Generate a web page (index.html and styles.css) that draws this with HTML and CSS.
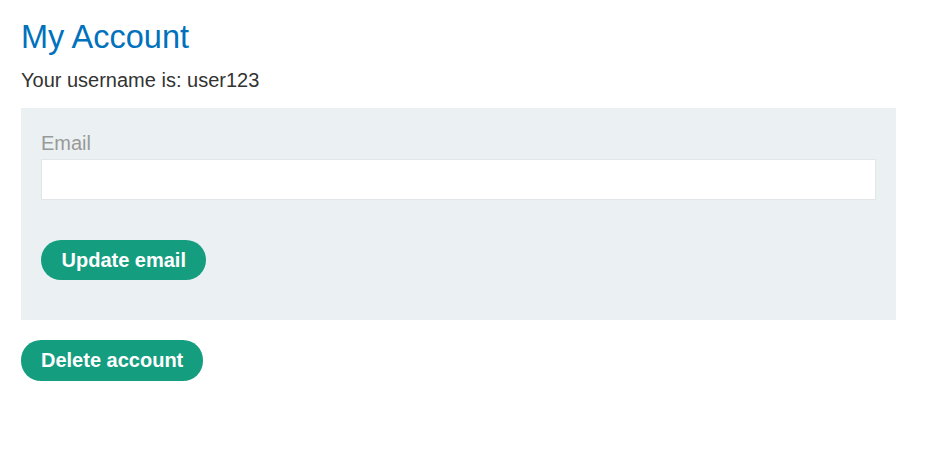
FILE: index.html
```html
<!DOCTYPE html>
<html>
<head>
<meta charset="utf-8">
<link rel="stylesheet" href="styles.css">
</head>
<body>
<main class="page">
  <h1 class="title">My Account</h1>
  <p class="username">Your username is: user123</p>
  <form class="panel">
    <label class="label" for="email">Email</label>
    <input class="input" id="email" type="email">
    <button class="button" type="button">Update email</button>
  </form>
  <button class="button button-delete" type="button">Delete account</button>
</main>
</body>
</html>
```

FILE: styles.css
```css
html, body {
  margin: 0;
  padding: 0;
  background: #fff;
}
body {
  font-family: "Liberation Sans", Arial, sans-serif;
  color: #333332;
}
.page {
  padding: 17px 54px 0 21px;
  display: flex;
  flex-direction: column;
  align-items: flex-start;
}
.title {
  margin: 0;
  font-size: 32.5px;
  font-weight: normal;
  line-height: 40px;
  color: #0071bc;
}
.username {
  margin: 11px 0 0 0;
  font-size: 20px;
  line-height: 24px;
}
.panel {
  margin-top: 16px;
  align-self: stretch;
  background: #ebf0f2;
  padding: 21px 20px 40px 20px;
  display: flex;
  flex-direction: column;
  align-items: flex-start;
}
.label {
  font-size: 20px;
  line-height: 28px;
  color: #999;
}
.input {
  align-self: stretch;
  box-sizing: border-box;
  height: 41px;
  margin: 2px 0 40px 0;
  border: 1px solid #e3e6e8;
  background: #fff;
}
.button {
  font-family: "Liberation Sans", Arial, sans-serif;
  font-weight: bold;
  font-size: 20px;
  color: #fff;
  background: #159d80;
  border: 0;
  border-radius: 20px;
  height: 40px;
  padding: 0 20.5px;
  cursor: pointer;
}
.button-delete {
  margin-top: 20px;
  height: 41px;
  padding: 0 20px;
}
```
